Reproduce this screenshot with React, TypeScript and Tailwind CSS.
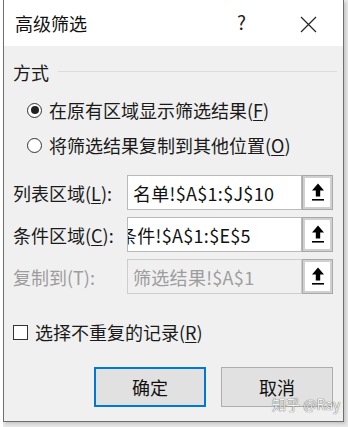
import React from "react";

const font = { fontFamily: '"Noto Sans CJK SC", "Noto Sans", sans-serif' };

function UpButton() {
  return (
    <div className="w-[31px] h-full border border-[#a9a9a9] bg-[#d0d0d0] p-[2px] box-border">
      <div className="w-full h-full bg-white flex items-center justify-center">
        <svg width="14" height="19" viewBox="0 0 14 19">
          <path d="M7 0.5 L13 7.5 L9.2 7.5 L9.2 13.5 L4.8 13.5 L4.8 7.5 L1 7.5 Z" fill="#000" />
          <rect x="1" y="16" width="12" height="1.6" fill="#000" />
        </svg>
      </div>
    </div>
  );
}

function Row({
  label,
  value,
  disabled,
  shift,
}: {
  label: React.ReactNode;
  value: string;
  disabled?: boolean;
  shift?: boolean;
}) {
  return (
    <div className="flex items-center h-[35px]">
      <div
        className={`w-[114px] text-[18px] leading-[24px] ${
          disabled ? "text-[#9d9d9d]" : "text-[#1a1a1a]"
        }`}
      >
        {label}
      </div>
      <div
        className={`w-[175px] h-full border box-border overflow-hidden flex items-center whitespace-nowrap ${
          disabled
            ? "bg-[#f0f0f0] border-[#cdcdcd] text-[#9d9d9d]"
            : "bg-white border-[#b9b9b9] text-[#111]"
        }`}
      >
        <span
          className={`text-[18px] leading-[24px] tracking-[0.3px] ${
            shift ? "ml-[-9px]" : "ml-[5px]"
          }`}
        >
          {value}
        </span>
      </div>
      <UpButton />
    </div>
  );
}

export default function App() {
  return (
    <div
      className="w-[348px] h-[427px] bg-[#e8e8e8] relative overflow-hidden flex"
      style={font}
    >
      <div className="w-[3px] h-full bg-white" />
      <div className="w-[341px] h-[422px] border-x border-b border-[#6f6f6f] bg-[#f0f0f0] flex flex-col relative shadow-[2px_2px_3px_rgba(0,0,0,0.15)]">
        {/* Title bar */}
        <div className="h-[46px] bg-white flex items-center relative">
          <span className="ml-[11px] text-[18px] leading-[24px] text-[#111]">
            高级筛选
          </span>
          <span className="absolute left-[233px] top-[10px] text-[19px] leading-[24px] text-[#222]">
            ?
          </span>
          <svg
            className="absolute left-[296px] top-[16px]"
            width="17"
            height="17"
            viewBox="0 0 17 17"
          >
            <path d="M1 1 L16 16 M16 1 L1 16" stroke="#222" strokeWidth="1.2" />
          </svg>
        </div>

        {/* Body */}
        <div className="flex flex-col pl-[9px]">
          <div className="flex items-center h-[24px] mt-[14px]">
            <span className="text-[18px] leading-[24px] text-[#1a1a1a]">
              方式
            </span>
            <div className="ml-[9px] mr-[6px] flex-1 h-px bg-[#dcdcdc] mt-[-2px]" />
          </div>

          <div className="flex items-center h-[24px] mt-[14px] pl-[14px]">
            <div className="w-[15px] h-[15px] rounded-full border border-[#333] bg-white flex items-center justify-center">
              <div className="w-[8px] h-[8px] rounded-full bg-[#222]" />
            </div>
            <span className="ml-[7px] text-[18px] leading-[24px] text-[#1a1a1a]">
              在原有区域显示筛选结果(<span className="underline underline-offset-2">F</span>)
            </span>
          </div>

          <div className="flex items-center h-[24px] mt-[11px] pl-[14px]">
            <div className="w-[15px] h-[15px] rounded-full border border-[#333] bg-white" />
            <span className="ml-[7px] text-[18px] leading-[24px] text-[#1a1a1a]">
              将筛选结果复制到其他位置(<span className="underline underline-offset-2">O</span>)
            </span>
          </div>

          <div className="flex flex-col gap-[7px] mt-[18px]">
            <Row
              label={
                <>
                  列表区域(<span className="underline underline-offset-2">L</span>):
                </>
              }
              value="名单!$A$1:$J$10"
            />
            <Row
              label={
                <>
                  条件区域(<span className="underline underline-offset-2">C</span>):
                </>
              }
              value="条件!$A$1:$E$5"
              shift
            />
            <Row label="复制到(T):" value="筛选结果!$A$1" disabled />
          </div>

          <div className="flex items-center h-[24px] mt-[26px]">
            <div className="w-[15px] h-[15px] border border-[#333] bg-white" />
            <span className="ml-[7px] text-[18px] leading-[24px] text-[#1a1a1a]">
              选择不重复的记录(<span className="underline underline-offset-2">R</span>)
            </span>
          </div>

          <div className="flex mt-[23px] pl-[81px] gap-[15px]">
            <div className="w-[112px] h-[40px] border-2 border-[#0078d7] bg-[#e1e1e1] flex items-center justify-center text-[18px] text-[#111]">
              确定
            </div>
            <div className="w-[112px] h-[40px] border border-[#adadad] bg-[#e1e1e1] flex items-center justify-center text-[18px] text-[#111]">
              取消
            </div>
          </div>
        </div>

        <div
          className="absolute left-[268px] top-[395px] text-[14px] leading-[18px] text-[#f4f4f4]"
          style={{ textShadow: "0 0 1px rgba(0,0,0,0.6), 0 0 1px rgba(0,0,0,0.4)" }}
        >
          知乎 @Ray
        </div>
      </div>
    </div>
  );
}
